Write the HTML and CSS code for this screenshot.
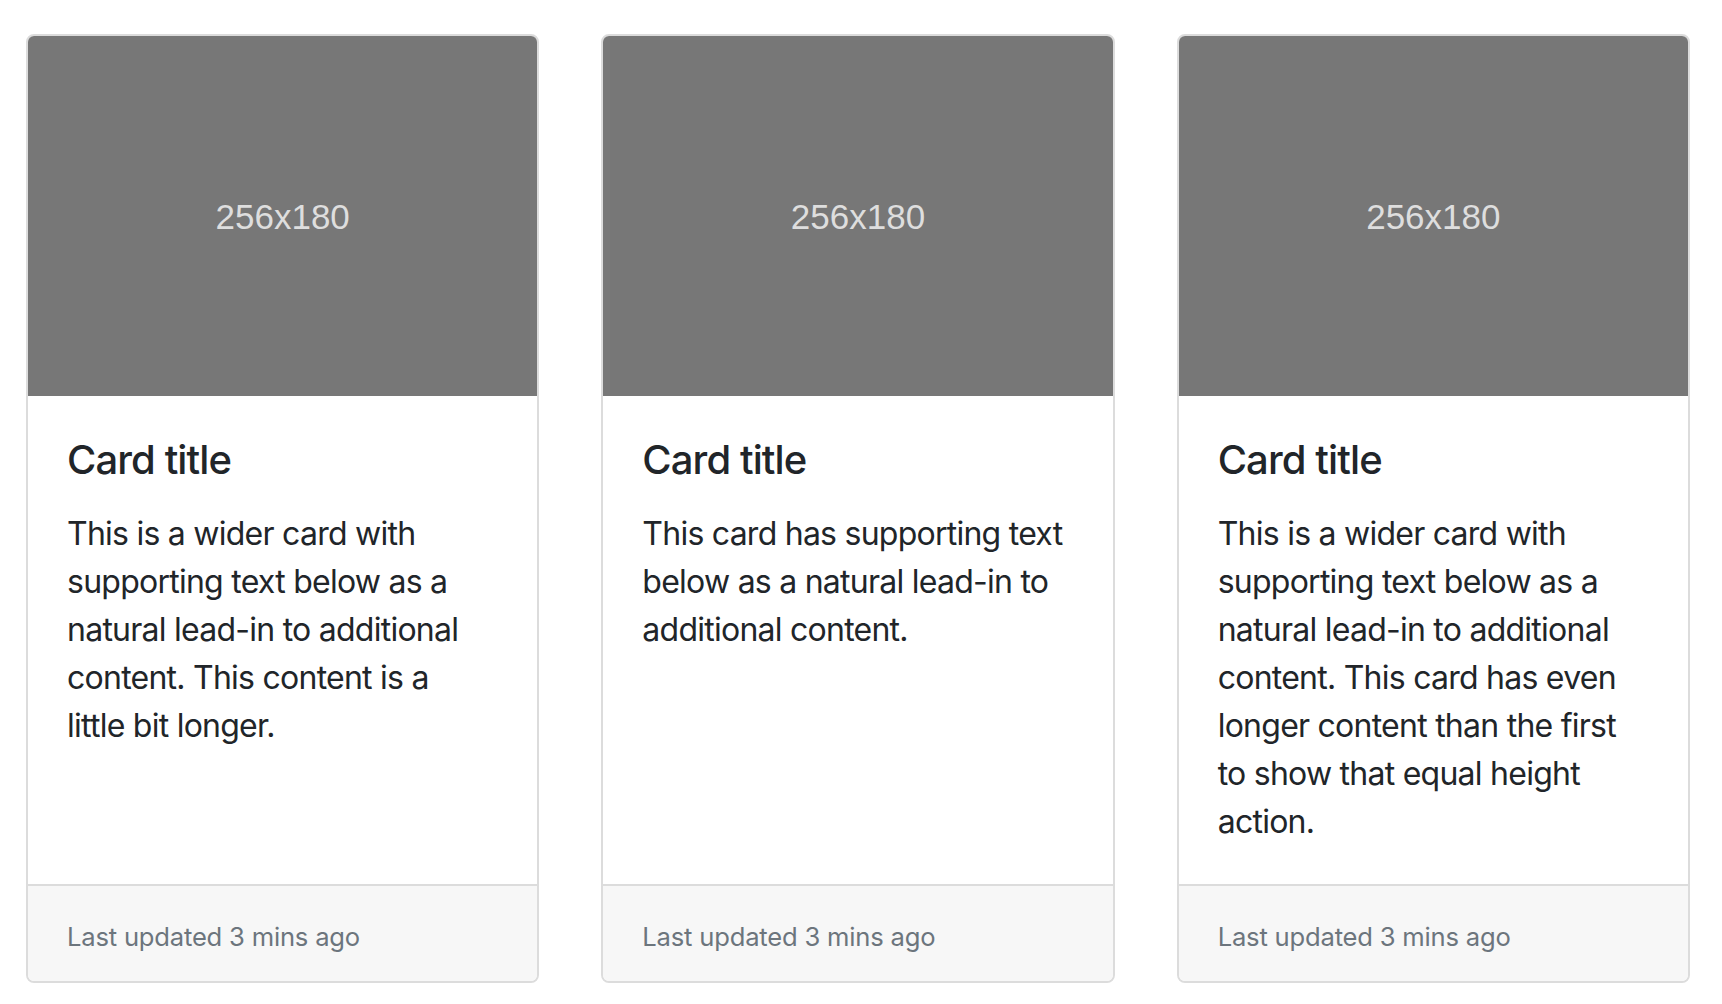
FILE: index.html
```html
<!DOCTYPE html>
<html lang="en">
<head>
<meta charset="utf-8">
<title>Card deck</title>
<link rel="stylesheet" href="styles.css">
</head>
<body>
<div class="deck">
  <div class="card">
    <div class="card-img"><span>256x180</span></div>
    <div class="card-body">
      <h5 class="card-title">Card title</h5>
      <p class="card-text">This is a wider card with supporting text below as a natural lead-in to additional content. This content is a little bit longer.</p>
    </div>
    <div class="card-footer"><small class="muted">Last updated 3 mins ago</small></div>
  </div>
  <div class="card">
    <div class="card-img"><span>256x180</span></div>
    <div class="card-body">
      <h5 class="card-title">Card title</h5>
      <p class="card-text">This card has supporting text below as a natural lead-in to additional content.</p>
    </div>
    <div class="card-footer"><small class="muted">Last updated 3 mins ago</small></div>
  </div>
  <div class="card">
    <div class="card-img"><span>256x180</span></div>
    <div class="card-body">
      <h5 class="card-title">Card title</h5>
      <p class="card-text">This is a wider card with supporting text below as a natural lead-in to additional content. This card has even longer content than the first to show that equal height action.</p>
    </div>
    <div class="card-footer"><small class="muted">Last updated 3 mins ago</small></div>
  </div>
</div>
</body>
</html>
```
FILE: styles.css
```css
* { box-sizing: border-box; }
html, body { margin: 0; padding: 0; background: #fff; }
body {
  font-family: Inter, "Noto Sans", "Liberation Sans", sans-serif;
  font-size: 32px;
  line-height: 48px;
  color: #212529;
}
.deck {
  display: grid;
  grid-template-columns: repeat(3, 1fr);
  column-gap: 62px;
  padding: 34px 32px 0 26px;
}
.card {
  display: flex;
  flex-direction: column;
  border: 2px solid #dcdcdc;
  border-radius: 8px;
  overflow: hidden;
  background: #fff;
}
.card-img {
  height: 360px;
  background: #777777;
  display: flex;
  align-items: center;
  justify-content: center;
}
.card-img span {
  font-family: "Liberation Sans", Arial, sans-serif;
  font-size: 35px;
  color: #dedede;
  line-height: 1;
}
.card-body {
  flex: 1;
  padding: 40px 47px 38px 39px;
}
.card-title {
  margin: 0 0 26px;
  font-size: 40px;
  line-height: 48px;
  font-weight: 500;
  letter-spacing: -0.9px;
}
.card-text {
  margin: 0;
  letter-spacing: -0.75px;
}
.card-footer {
  padding: 25px 40px 20px 39px;
  background: #f7f7f7;
  border-top: 2px solid #dcdcdc;
}
.muted {
  font-size: 25.6px;
  color: #6c757d;
  letter-spacing: -0.2px;
}
```
